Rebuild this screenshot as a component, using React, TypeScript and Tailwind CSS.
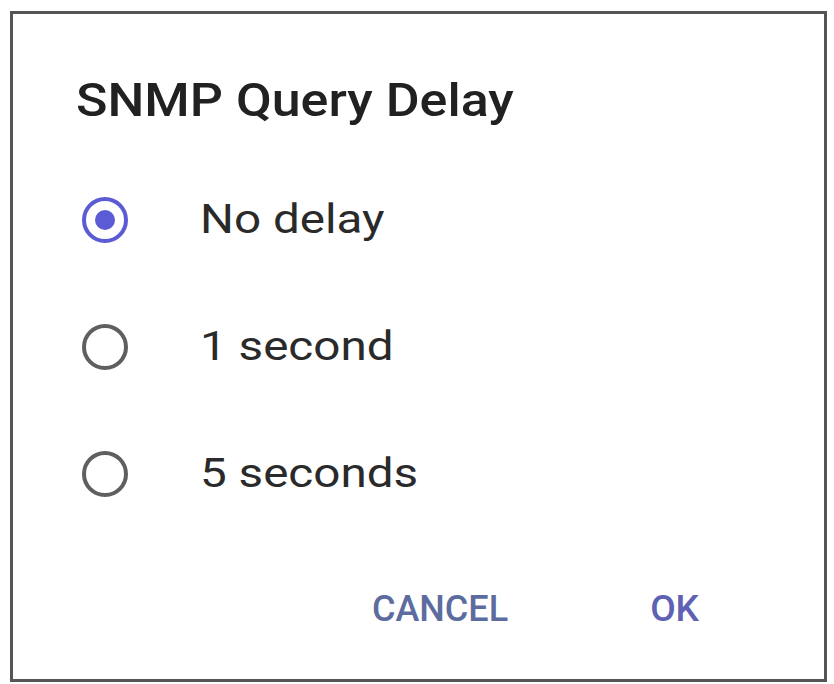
const options = ['No delay', '1 second', '5 seconds'];

const Radio = ({ checked }: { checked: boolean }) => (
  <div
    className={
      checked
        ? 'w-[46px] h-[46px] rounded-full border-[4px] border-[#5b5bd6] flex items-center justify-center'
        : 'w-[46px] h-[46px] rounded-full border-[4px] border-[#5f5f5f]'
    }
  >
    {checked && <div className="w-[20px] h-[20px] rounded-full bg-[#5b5bd6]" />}
  </div>
);

const App = () => {
  return (
    <div
      className="w-[834px] h-[684px] bg-white pt-[11px] pl-[10px]"
      style={{ fontFamily: 'Roboto, "Liberation Sans", sans-serif' }}
    >
      <div className="w-[817px] h-[671px] border-[3px] border-[#555] flex flex-col">
        <h1 className="pl-[63px] pt-[59px] text-[46px] leading-[54px] font-medium text-[#212121]">
          <span className="inline-block origin-left scale-x-[1.13]">SNMP Query Delay</span>
        </h1>
        <div className="flex flex-col pt-[29px]">
          {options.map((option, idx) => (
            <div key={idx} className="flex items-center h-[127px] pl-[69px]">
              <Radio checked={idx === 0} />
              <span className="ml-[72px] inline-block origin-left scale-x-[1.19] text-[40px] text-[#2a2a2a]">
                {option}
              </span>
            </div>
          ))}
        </div>
        <div className="flex justify-end items-center gap-[142px] pr-[125px] mt-[44px]">
          <span className="text-[36px] font-medium text-[#5d6c9e]">CANCEL</span>
          <span className="text-[37px] font-medium text-[#5f62b4]">OK</span>
        </div>
      </div>
    </div>
  );
};

export default App;
